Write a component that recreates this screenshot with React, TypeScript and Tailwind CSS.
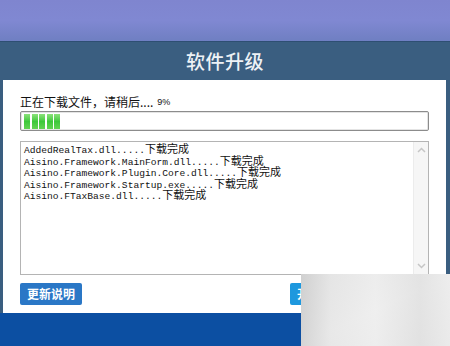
const LOG = [
  { file: "AddedRealTax.dll.....", done: "下载完成" },
  { file: "Aisino.Framework.MainForm.dll.....", done: "下载完成" },
  { file: "Aisino.Framework.Plugin.Core.dll.....", done: "下载完成" },
  { file: "Aisino.Framework.Startup.exe.....", done: "下载完成" },
  { file: "Aisino.FTaxBase.dll.....", done: "下载完成" },
];

const cjk = '"Noto Sans CJK SC", "Liberation Sans", sans-serif';

function ProgressBar({ blocks }: { blocks: number }) {
  return (
    <div className="h-[20px] rounded-[2px] border border-[#8c8c8c] bg-white px-[3px] py-[1px] shadow-[inset_0_0_0_1px_#e4e4e4] flex items-center gap-[1.5px]">
      {Array.from({ length: blocks }).map((_, i) => (
        <div
          key={i}
          className="h-[15px] w-[6px] bg-gradient-to-b from-[#8ae27a] via-[#3cc83a] to-[#62d452]"
        />
      ))}
    </div>
  );
}

function LogBox() {
  return (
    <div className="h-[134px] border border-[#b4b4b4] bg-white flex">
      <div className="flex-1 pl-[3px] pt-[3px] font-['Liberation_Mono','Noto_Sans_CJK_SC',monospace] text-[9.6px] leading-[11.5px] text-[#111]">
        {LOG.map((l) => (
          <div key={l.file} className="h-[11.5px] flex items-center whitespace-pre">
            {l.file}
            <span className="text-[11px] leading-[11.5px]">{l.done}</span>
          </div>
        ))}
      </div>
      {/* scrollbar */}
      <div className="w-[15px] bg-[#f6f6f6] border-l border-[#ececec] flex flex-col justify-between items-center py-[5px]">
        <svg width="9" height="6" viewBox="0 0 9 6">
          <path d="M1 5 L4.5 1.5 L8 5" fill="none" stroke="#c6c6c6" strokeWidth="1.5" />
        </svg>
        <svg width="9" height="6" viewBox="0 0 9 6">
          <path d="M1 1 L4.5 4.5 L8 1" fill="none" stroke="#c6c6c6" strokeWidth="1.5" />
        </svg>
      </div>
    </div>
  );
}

export default function App() {
  return (
    <div className="relative w-[450px] h-[346px] overflow-hidden flex flex-col bg-[#0c4fa2]" style={{ fontFamily: cjk }}>
      <div className="h-[41px] bg-gradient-to-b from-[#7f85cf] via-[#8088d2] to-[#6f7fc2]" />
      <div className="h-[39px] bg-[#3a5e80] flex items-center justify-center border-t border-[#2e4f72]">
        <span className="text-[19px] font-medium text-[#eef2f6] tracking-[0.5px]">软件升级</span>
      </div>
      <div className="h-[233px] flex">
        <div className="w-[3px] bg-[#3a5e80]" />
        <div className="flex-1 bg-white px-[17px] pt-[13px] flex flex-col">
          <div className="h-[16px] flex items-end text-[12px] leading-[14px] text-[#111]">
            正在下载文件，请稍后....
            <span className="ml-[4px] text-[9px] font-['Liberation_Sans',sans-serif]">9%</span>
          </div>
          <div className="mt-[2px]">
            <ProgressBar blocks={5} />
          </div>
          <div className="mt-[10px]">
            <LogBox />
          </div>
          <div className="mt-[8px] flex justify-between">
            <button className="h-[22px] w-[62px] rounded-[2px] bg-[#2a77c6] text-white text-[12px] font-bold">
              更新说明
            </button>
            <button className="h-[22px] w-[62px] mr-[77px] rounded-[2px] bg-[#1e98de] text-white text-[12px] font-bold">
              开始升级
            </button>
          </div>
        </div>
        <div className="w-[4px] bg-[#3a5e80]" />
      </div>
      <div className="flex-1 bg-[#0c4fa2]" />
      {/* watermark */}
      <div className="absolute left-[301px] top-[274px] w-[149px] h-[72px] bg-gradient-to-br from-[#d4d4d4] via-[#eaeaea] to-[#dcdcdc]">
        <div className="absolute inset-0 bg-[linear-gradient(90deg,#cfcfcf_0%,#e8e8e8_20%,#f0f0f0_50%,#e2e2e2_80%,#eeeeee_100%)] opacity-80" />
      </div>
    </div>
  );
}
